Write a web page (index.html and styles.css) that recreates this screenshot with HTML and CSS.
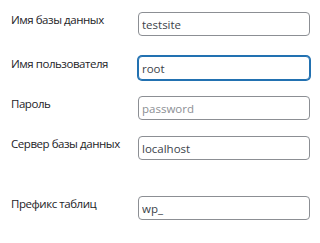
FILE: index.html
```html
<!DOCTYPE html>
<html lang="ru">
<head>
<meta charset="utf-8">
<link rel="stylesheet" href="styles.css">
</head>
<body>
<form class="setup">
  <div class="row row-first">
    <label class="label" for="dbname">Имя базы данных</label>
    <input class="field" id="dbname" type="text" value="testsite">
  </div>
  <div class="row">
    <label class="label" for="uname">Имя пользователя</label>
    <input class="field focused" id="uname" type="text" value="root">
  </div>
  <div class="row">
    <label class="label" for="pwd">Пароль</label>
    <input class="field" id="pwd" type="text" placeholder="password">
  </div>
  <div class="row row-tall">
    <label class="label" for="dbhost">Сервер базы данных</label>
    <input class="field" id="dbhost" type="text" value="localhost">
  </div>
  <div class="row">
    <label class="label" for="prefix">Префикс таблиц</label>
    <input class="field" id="prefix" type="text" value="wp_">
  </div>
</form>
</body>
</html>
```
FILE: styles.css
```css
html, body {
  margin: 0;
  padding: 0;
  background: #ffffff;
}
body {
  font-family: "Open Sans", "Noto Sans", sans-serif;
  color: #1d2327;
}
.setup {
  display: flex;
  flex-direction: column;
  padding: 12px 0 0 11px;
}
.row {
  display: flex;
  align-items: flex-start;
  margin-bottom: 16px;
}
.row-first {
  margin-bottom: 20px;
}
.row-tall {
  margin-bottom: 36px;
}
.label {
  width: 127px;
  flex: none;
  font-size: 11.5px;
  font-weight: 500;
  letter-spacing: -0.45px;
  line-height: 16px;
  color: #1d2327;
}
.field {
  box-sizing: border-box;
  width: 172px;
  height: 24px;
  margin: 0;
  padding: 0 3px;
  border: 1px solid #8c8f94;
  border-radius: 4px;
  background: #ffffff;
  font-family: "Open Sans", "Noto Sans", sans-serif;
  font-size: 11.5px;
  color: #3c434a;
  outline: none;
}
.field::placeholder {
  color: #8c8f94;
}
.focused {
  border-color: #2271b1;
  box-shadow: 0 0 0 1px #2271b1;
}
```
